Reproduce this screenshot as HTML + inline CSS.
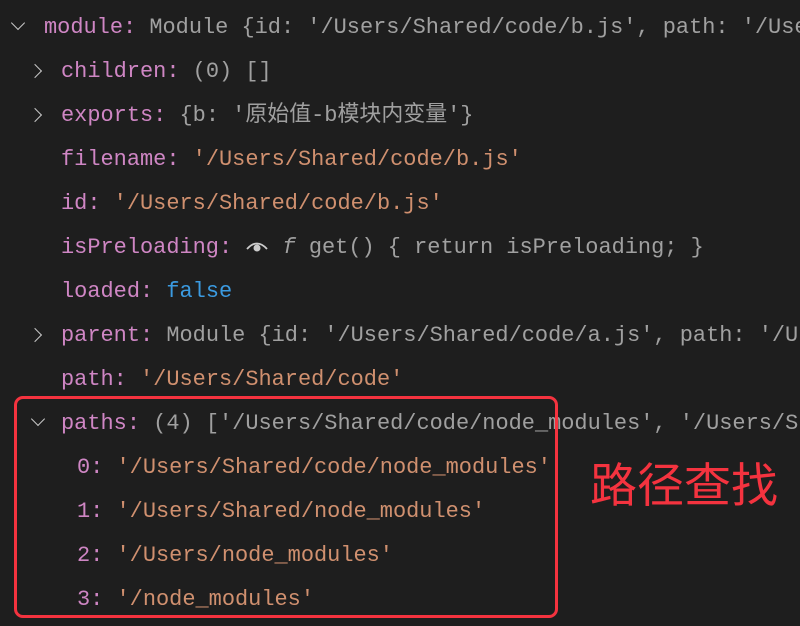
<!DOCTYPE html>
<html><head><meta charset="utf-8"><style>
body{margin:0;width:800px;height:626px;background:#1e1e1e;overflow:hidden;position:relative;font-family:"Liberation Mono","Noto Sans CJK SC",monospace;font-size:21.95px;}
.r{position:absolute;height:44px;line-height:48px;white-space:nowrap;color:#a0a0a0;}
.k{color:#cf86c4}.s{color:#d0906f}.b{color:#3b9ae0}.g{color:#a0a0a0}
.a{position:absolute;width:9px;height:9px;border-right:1.4px solid #c8c8c8;border-bottom:1.4px solid #c8c8c8;}
.box{position:absolute;left:14px;top:396px;width:538px;height:216px;border:3px solid #f4333f;border-radius:9px;}
.cn{position:absolute;left:590px;top:450px;font-family:"Noto Sans CJK SC",sans-serif;font-size:47px;color:#f4333f;line-height:64px;}
</style></head><body>
<div class="a" style="left:13px;top:18px;transform:rotate(45deg)"></div>
<div class="r" style="left:44px;top:4px"><span class="k">module:</span> Module {id: '/Users/Shared/code/b.js', path: '/Use</div>
<div class="a" style="left:30px;top:66px;transform:rotate(-45deg)"></div>
<div class="r" style="left:61px;top:48px"><span class="k">children:</span> (0) []</div>
<div class="a" style="left:30px;top:110px;transform:rotate(-45deg)"></div>
<div class="r" style="left:61px;top:92px"><span class="k">exports:</span> {b: '原始值-b模块内变量'}</div>
<div class="r" style="left:61px;top:136px"><span class="k">filename:</span> <span class="s">'/Users/Shared/code/b.js'</span></div>
<div class="r" style="left:61px;top:180px"><span class="k">id:</span> <span class="s">'/Users/Shared/code/b.js'</span></div>
<div class="r" style="left:61px;top:224px"><span class="k">isPreloading:</span> <svg width="24" height="16" viewBox="0 0 24 16" style="vertical-align:-1px"><path d="M2 11 Q12 0 22 11" fill="none" stroke="#ccc" stroke-width="1.8"/><circle cx="12" cy="10" r="3.5" fill="#ccc"/></svg> <i>f</i> get() { return isPreloading; }</div>
<div class="r" style="left:61px;top:268px"><span class="k">loaded:</span> <span class="b">false</span></div>
<div class="a" style="left:30px;top:330px;transform:rotate(-45deg)"></div>
<div class="r" style="left:61px;top:312px"><span class="k">parent:</span> Module {id: '/Users/Shared/code/a.js', path: '/U</div>
<div class="r" style="left:61px;top:356px"><span class="k">path:</span> <span class="s">'/Users/Shared/code'</span></div>
<div class="a" style="left:33px;top:414px;transform:rotate(45deg)"></div>
<div class="r" style="left:61px;top:400px"><span class="k">paths:</span> (4) ['/Users/Shared/code/node_modules', '/Users/Sh</div>
<div class="r" style="left:77px;top:444px"><span class="k">0:</span> <span class="s">'/Users/Shared/code/node_modules'</span></div>
<div class="r" style="left:77px;top:488px"><span class="k">1:</span> <span class="s">'/Users/Shared/node_modules'</span></div>
<div class="r" style="left:77px;top:532px"><span class="k">2:</span> <span class="s">'/Users/node_modules'</span></div>
<div class="r" style="left:77px;top:576px"><span class="k">3:</span> <span class="s">'/node_modules'</span></div>
<div class="box"></div>
<div class="cn">路径查找</div>
</body></html>
